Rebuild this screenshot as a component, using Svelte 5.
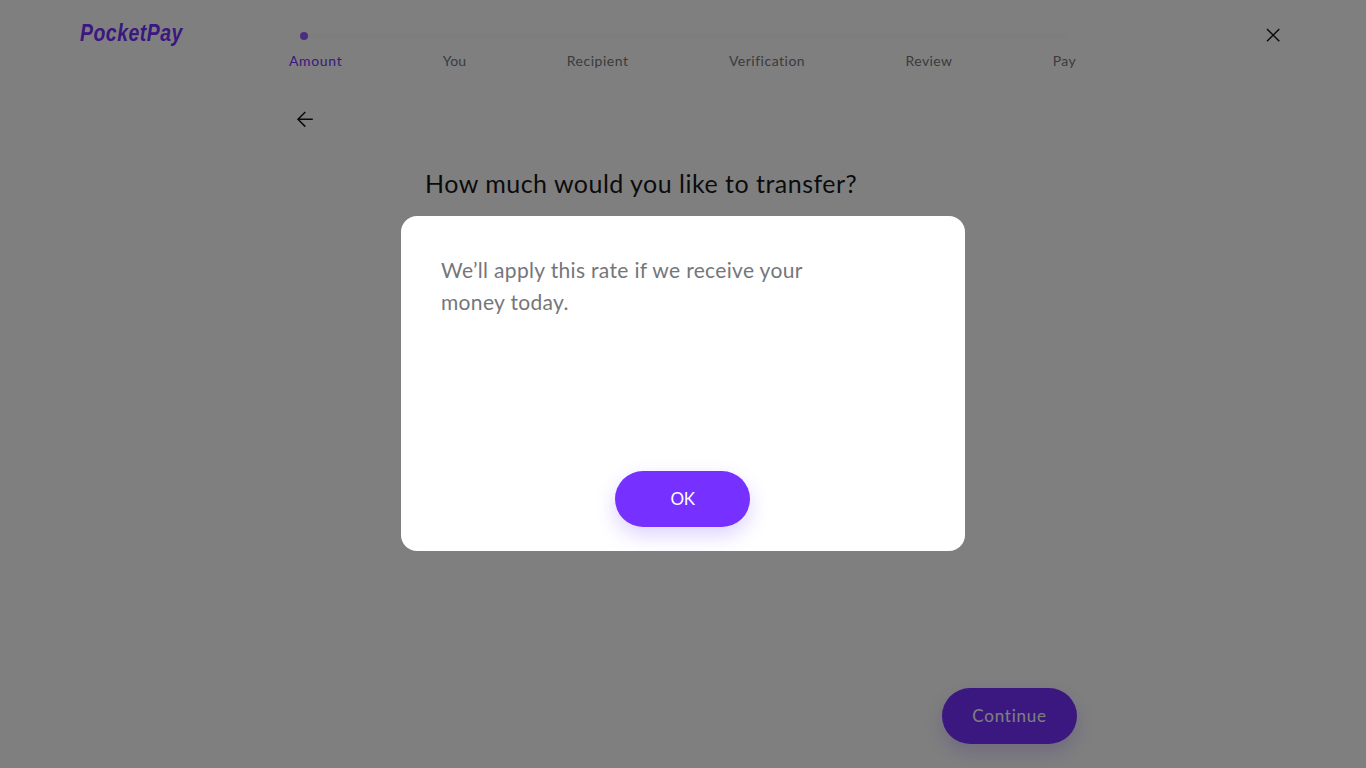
<script>
  const steps = [
    { name: 'Amount', spacing: 0.65 },
    { name: 'You', spacing: 0.2 },
    { name: 'Recipient', spacing: 0.52 },
    { name: 'Verification', spacing: 0.5 },
    { name: 'Review', spacing: 0.4 },
    { name: 'Pay', spacing: 0.3 }
  ];
</script>

<div class="page">
  <header>
    <div class="logo"><span>PocketPay</span></div>
    <div class="progress">
      <div class="track"><div class="dot"></div></div>
      <nav>
        {#each steps as step, i}
          <span class="step" class:active={i === 0} style="letter-spacing: {step.spacing}px">{step.name}</span>
        {/each}
      </nav>
    </div>
    <button class="close" aria-label="Close">
      <svg width="16" height="16" viewBox="0 0 16 16"><path d="M2 2L14.3 14.3M14.3 2L2 14.3" /></svg>
    </button>
  </header>

  <main>
    <button class="back" aria-label="Back">
      <svg width="18" height="18" viewBox="0 0 18 18"><path d="M16.8 9.3H2M9.3 2L2 9.3L9.3 16.6" /></svg>
    </button>
    <h1>How much would you like to transfer?</h1>
  </main>

  <footer><button class="pill"><span class="continue">Continue</span></button></footer>
</div>

<div class="overlay">
  <section class="dialog" role="dialog" aria-modal="true">
    <p>We’ll apply this rate if we receive your<br />money today.</p>
    <button class="pill"><span class="ok">OK</span></button>
  </section>
</div>

<style>
  :global(body) {
    background: #fff;
    overflow: hidden;
  }
  .page, .overlay {
    font-family: Lato, sans-serif;
    box-sizing: border-box;
    width: 100%;
    height: 768px;
  }
  .page {
    display: flex;
    flex-direction: column;
  }
  button {
    border: 0;
    padding: 0;
    background: none;
    font-family: inherit;
  }
  svg {
    display: block;
    fill: none;
    stroke: #16171a;
    stroke-width: 1.5;
  }
  header {
    display: flex;
    align-items: flex-start;
    height: 110px;
    padding: 0 85px 0 80px;
    box-sizing: border-box;
  }
  .logo {
    width: 209px;
    margin-top: 19px;
    font: italic bold 23px/28px "Liberation Sans", sans-serif;
    color: #7630ff;
  }
  .logo span {
    display: inline-block;
    letter-spacing: 0.6px;
    transform: scaleX(0.845);
    transform-origin: left;
  }
  .progress {
    width: 787px;
    padding-top: 32px;
  }
  .track {
    display: flex;
    align-items: center;
    height: 4px;
    width: 766px;
    margin: 2px 0 0 11px;
    border-radius: 2px;
    background: #fafafa;
  }
  .dot {
    width: 8px;
    height: 8px;
    border-radius: 50%;
    background: #935eff;
  }
  nav {
    display: flex;
    justify-content: space-between;
    margin-top: 13px;
  }
  .step {
    font-size: 14px;
    line-height: 20px;
    color: #75767a;
  }
  .step.active {
    color: #7630ff;
  }
  .close {
    margin: 27px 0 0 auto;
  }
  main {
    flex: 1;
    padding-left: 296px;
  }
  h1 {
    margin: 34px 0 0 129px;
    font-size: 25px;
    line-height: 36px;
    font-weight: 400;
    letter-spacing: 0.49px;
    color: #16171a;
    white-space: nowrap;
  }
  footer {
    display: flex;
    justify-content: flex-end;
    padding: 0 289px 24px 0;
  }
  .pill {
    width: 135px;
    height: 56px;
    border-radius: 28px;
    background: #7630ff;
    box-shadow: 0 8px 20px rgba(98, 48, 255, 0.22);
    color: #fff;
    font-size: 17px;
    line-height: 24px;
  }
  .continue {
    letter-spacing: 0.75px;
  }
  .overlay {
    position: fixed;
    top: 0;
    left: 0;
    display: flex;
    align-items: center;
    justify-content: center;
    padding-bottom: 1px;
    background: rgba(0, 0, 0, 0.5);
  }
  .dialog {
    display: flex;
    flex-direction: column;
    align-items: center;
    justify-content: space-between;
    box-sizing: border-box;
    width: 564px;
    height: 335px;
    padding: 38px 41px 24px 40px;
    border-radius: 16px;
    background: #fff;
  }
  .ok {
    letter-spacing: -0.5px;
  }
  p {
    align-self: flex-start;
    margin: 0;
    font-size: 21px;
    line-height: 32px;
    letter-spacing: 0.33px;
    color: #75767a;
    white-space: nowrap;
  }
</style>
